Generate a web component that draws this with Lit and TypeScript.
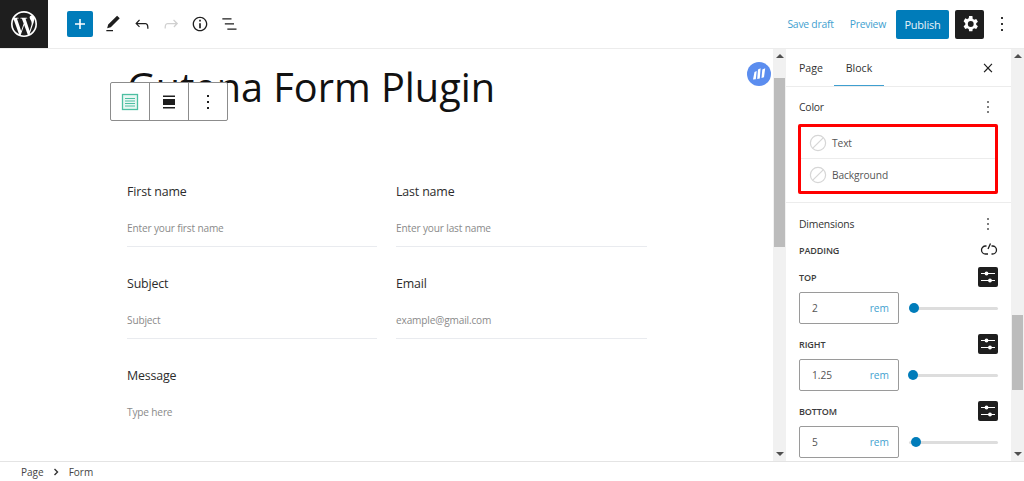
import { LitElement, html, css } from "lit";
import { customElement } from "lit/decorators.js";

const kebab = html`<svg width="24" height="24" viewBox="0 0 24 24" fill="currentColor"><path d="M13 19h-2v-2h2v2zm0-6h-2v-2h2v2zm0-6h-2V5h2v2z"/></svg>`;
const sliders = html`<svg width="20" height="20" viewBox="0 0 20 20" fill="none" stroke="#fff" stroke-width="1.200"><path d="M3 6.500h14M3 13.500h14"/><circle cx="8.500" cy="6.500" r="1.900" fill="#fff" stroke="none"/><circle cx="12" cy="13.500" r="1.900" fill="#fff" stroke="none"/></svg>`;
const noColor = html`<svg class="swatch" width="18" height="18" viewBox="0 0 18 18" fill="none" stroke="#d6d6d6" stroke-width="1.200"><circle cx="9" cy="9" r="7.600"/><path d="M3.800 14.200 14.200 3.800"/></svg>`;

@customElement("app-root")
export class AppRoot extends LitElement {
  static styles = css`
    :host { display: flex; flex-direction: column; width: 1024px; height: 481px; overflow: hidden; background: #fff; color: #1e1e1e; font-family: "Open Sans", "Noto Sans", sans-serif; font-size: 13px; }
    .top { height: 48px; flex: none; display: flex; align-items: center; border-bottom: 1px solid #ececec; }
    .logo { width: 48px; height: 48px; background: #1e1e1e; display: flex; align-items: center; justify-content: center; }
    .tools { display: flex; align-items: center; margin-left: 19px; gap: 0; }
    .add { width: 26px; height: 26px; background: #007cba; border-radius: 2px; display: flex; align-items: center; justify-content: center; margin-right: 6px; }
    .ic { width: 28px; height: 28px; display: flex; align-items: center; justify-content: center; color: #1e1e1e; margin-right: 1px; }
    .ic.off { color: #d0d0d0; }
    .right { margin-left: auto; display: flex; align-items: center; }
    .link { color: #3f9fd0; font-size: 10.4px; letter-spacing: -0.25px; }
    .draft { margin-right: 16px; }
    .prev { margin-right: 10px; }
    .pub { width: 53px; height: 29px; background: #007cba; color: #e8f4fa; border-radius: 2px; display: flex; align-items: center; justify-content: center; font-size: 11px; letter-spacing: -0.2px; margin-right: 6px; }
    .gear { width: 29px; height: 29px; background: #1e1e1e; border-radius: 2px; display: flex; align-items: center; justify-content: center; margin-right: 6px; }
    .more { width: 24px; display: flex; justify-content: center; margin-right: 10px; color: #333; }

    .main { flex: 1; min-height: 0; display: flex; }
    .canvas { width: 773px; flex: none; position: relative; overflow: hidden; padding: 12px 0 0 127px; box-sizing: border-box; }
    h1 { margin: 0; font-weight: 400; font-size: 39.7px; line-height: 52px; color: #111; white-space: nowrap; }
    .form { width: 520px; display: grid; grid-template-columns: 250px 251px; column-gap: 19px; margin-top: 70px; }
    .field { height: 92px; box-sizing: border-box; }
    .lbl { font-size: 12.4px; letter-spacing: -0.15px; line-height: 18px; height: 18px; color: #2c2c2c; margin-bottom: 18px; }
    .ph { font-size: 10.1px; letter-spacing: -0.15px; line-height: 18px; color: #8a8a8a; padding-bottom: 9px; border-bottom: 1px solid #e9ebef; }
    .ph.plain { border-bottom: 0; }

    .blocktb { position: absolute; left: 110px; top: 33px; height: 37px; display: flex; background: #fff; border: 1px solid #8c8c8c; border-radius: 2px; }
    .blocktb div { width: 38px; display: flex; align-items: center; justify-content: center; border-right: 1px solid #8c8c8c; color: #1e1e1e; }
    .blocktb div:last-child { border-right: 0; }
    .badge { position: absolute; left: 747px; top: 13px; width: 24px; height: 24px; }

    .sb { width: 13px; flex: none; background: #f1f1f1; display: flex; flex-direction: column; align-items: center; justify-content: space-between; position: relative; }
    .arrow { width: 0; height: 0; border-left: 4px solid transparent; border-right: 4px solid transparent; margin: 5px 0; }
    .arrow.up { border-bottom: 4px solid #505050; }
    .arrow.down { border-top: 4px solid #505050; }
    .thumb { position: absolute; left: 1px; right: 1px; background: #bcbcbc; }
    .t1 { top: 29px; height: 169px; }
    .t2 { top: 266px; height: 75px; }

    .side { width: 225px; flex: none; overflow: hidden; box-sizing: border-box; }
    .tabs { height: 37px; display: flex; align-items: stretch; border-bottom: 1px solid #ececec; font-size: 10.6px; color: #333; padding-left: 13px; }
    .tab { display: flex; align-items: center; padding-top: 1px; box-sizing: border-box; }
    .tab.page { margin-right: 11px; }
    .tab.block { width: 50px; justify-content: center; border-bottom: 1.5px solid #3f9fd0; height: 37px; }
    .close { margin-left: auto; margin-right: 16px; display: flex; align-items: center; }
    .panel { padding: 0 13px 0 13px; }
    .color { height: 116px; border-bottom: 1px solid #ececec; box-sizing: border-box; }
    .ph-row { display: flex; align-items: center; justify-content: space-between; font-size: 10.4px; letter-spacing: -0.2px; color: #333; height: 38px; padding-top: 1px; box-sizing: border-box; }
    .ph-row span { font-weight: 500; }
    .ph-row svg { margin-right: 0; color: #333; width: 20px; height: 20px; }
    .red { border: 3px solid #f00; border-radius: 2px; width: 200px; margin-left: -1px; box-sizing: border-box; height: 70px; margin-top: -1px; }
    .crow { height: 31px; display: flex; align-items: center; gap: 5px; padding-left: 8px; font-size: 10.2px; letter-spacing: -0.1px; color: #555; }
    .crow + .crow { border-top: 1px solid #ececec; height: 32px; }
    .dim .ph-row { height: 41px; padding-top: 0; }
    .cap { display: flex; align-items: center; justify-content: space-between; font-size: 9px; font-weight: 600; letter-spacing: -0.1px; color: #3c3c3c; }
    .padcap { height: 20px; margin-top: -4px; margin-bottom: 7px; }
    .sidecap { height: 20px; margin-bottom: 5px; }
    .sq { width: 20px; height: 20px; background: #1e1e1e; border-radius: 2px; }
    .ctrl { display: flex; align-items: center; height: 32px; margin-bottom: 10px; }
    .inp { width: 100px; height: 32px; box-sizing: border-box; border: 1px solid #9a9a9a; border-radius: 2px; display: flex; align-items: center; justify-content: space-between; padding: 0 9px 0 12px; font-size: 10.2px; color: #555; flex: none; }
    .inp b { font-weight: 400; color: #3f9fd0; }
    .slider { flex: none; width: 89px; margin-left: 10px; height: 3px; background: #ddd; border-radius: 2px; position: relative; }
    .knob { position: absolute; top: -3.500px; width: 10px; height: 10px; border-radius: 50%; background: #007cba; }

    .foot { height: 19px; flex: none; border-top: 1px solid #e4e4e4; display: flex; align-items: center; font-size: 10px; color: #444; padding-left: 21px; }
    .foot svg { margin: 0 10px 0 9px; }
  `;

  private side(label: string, value: string, knob: number) {
    return html`
      <div class="cap sidecap"><span>${label}</span><div class="sq">${sliders}</div></div>
      <div class="ctrl">
        <div class="inp"><span>${value}</span><b>rem</b></div>
        <div class="slider"><div class="knob" style="left:${knob}px"></div></div>
      </div>`;
  }

  private field(label: string, ph: string, plain = false) {
    return html`<div class="field"><div class="lbl">${label}</div><div class="ph ${plain ? "plain" : ""}">${ph}</div></div>`;
  }

  render() {
    return html`
      <div class="top">
        <div class="logo">
          <svg width="26" height="26" viewBox="0 0 24 24" fill="#fff"><path d="M12 0a12 12 0 1 0 0 24 12 12 0 0 0 0-24zM1.500 12c0-1.500.3-3 .9-4.300l5 13.700A10.500 10.500 0 0 1 1.500 12zM12 22.500c-1 0-2-.15-3-.43l3.150-9.160 3.230 8.850.08.140c-1.090.39-2.260.6-3.460.6zm1.450-15.420c.63-.03 1.200-.1 1.200-.1.560-.07.500-.9-.06-.86 0 0-1.700.13-2.800.13-1.030 0-2.770-.13-2.770-.13-.57-.04-.63.820-.06.860 0 0 .54.070 1.100.1l1.640 4.500-2.300 6.900L5.570 7.080c.63-.03 1.200-.1 1.200-.1.560-.07.500-.9-.06-.86 0 0-1.700.13-2.800.13h-.68A10.480 10.480 0 0 1 12 1.500c2.730 0 5.220 1.040 7.090 2.750h-.14c-1.030 0-1.760.9-1.760 1.860 0 .86.500 1.590 1.030 2.450.4.700.86 1.590.86 2.890 0 .9-.35 1.940-.8 3.400l-1.050 3.500zm3.830 13.980 3.200-9.260c.6-1.500.8-2.700.8-3.770 0-.39-.03-.75-.07-1.090A10.490 10.490 0 0 1 22.500 12c0 3.870-2.100 7.250-5.220 9.060z"/></svg>
        </div>
        <div class="tools">
          <div class="add"><svg width="16" height="16" viewBox="0 0 16 16" fill="#fff"><path d="M7.200 3h1.600v4.200H13v1.600H8.800V13H7.200V8.800H3V7.200h4.200z"/></svg></div>
          <div class="ic"><svg width="20" height="20" viewBox="0 0 24 24" fill="currentColor"><path d="M20.100 5.100 16.900 2 6.200 12.700 5 17l4.300-1.200L20.100 5.100zM4 20.800h8v-1.500H4v1.500z"/></svg></div>
          <div class="ic"><svg width="20" height="20" viewBox="0 0 24 24" fill="currentColor"><path d="M18.300 11.700c-.6-.6-1.400-.9-2.300-.9H6.700l2.900-3.300-1.100-1-4.500 5L8.500 16l1-1-2.700-2.700H16c.5 0 .9.200 1.300.5 1 1 1 3.400 1 4.500v.3h1.500v-.2c0-1.500 0-4.300-1.500-5.700z"/></svg></div>
          <div class="ic off"><svg width="20" height="20" viewBox="0 0 24 24" fill="currentColor"><path d="M15.600 6.500l-1.100 1 2.900 3.300H8c-.9 0-1.700.3-2.300.9-1.400 1.500-1.400 4.200-1.400 5.600v.2h1.500v-.3c0-1.100 0-3.500 1-4.500.3-.3.700-.5 1.300-.5h9.200L15 15.100l1 1 4.500-4.800-4.900-4.800z"/></svg></div>
          <div class="ic"><svg width="20" height="20" viewBox="0 0 24 24" fill="currentColor"><path d="M12 3.200c-4.800 0-8.800 3.900-8.800 8.800 0 4.800 3.900 8.800 8.800 8.800 4.800 0 8.800-3.900 8.800-8.800 0-4.800-4-8.800-8.800-8.800zm0 16c-4 0-7.200-3.300-7.200-7.200C4.800 8 8 4.800 12 4.800s7.200 3.300 7.200 7.200c0 4-3.200 7.200-7.200 7.200zM11 17h2v-6h-2v6zm0-8h2V7h-2v2z"/></svg></div>
          <div class="ic"><svg width="20" height="20" viewBox="0 0 24 24" fill="currentColor"><path d="M4 5h11v1.500H4zM7 11.200h11v1.500H7zM10 17.500h11V19H10z"/></svg></div>
        </div>
        <div class="right">
          <span class="link draft">Save draft</span>
          <span class="link prev">Preview</span>
          <div class="pub">Publish</div>
          <div class="gear"><svg width="20" height="20" viewBox="0 0 24 24" fill="#fff"><path fill-rule="evenodd" d="M19.400 13c.05-.33.080-.66.080-1s-.03-.67-.08-1l2.100-1.650-2-3.460-2.480 1a7.400 7.400 0 0 0-1.730-1L14.900 2.500h-4l-.38 2.650c-.63.25-1.200.6-1.730 1l-2.480-1-2 3.460L6.400 11c-.05.33-.08.66-.08 1s.03.67.08 1l-2.100 1.650 2 3.460 2.480-1c.53.4 1.100.75 1.730 1l.38 2.650h4l.38-2.650c.63-.25 1.200-.6 1.730-1l2.480 1 2-3.460zM12.900 15.500a3.500 3.500 0 1 1 0-7 3.500 3.500 0 0 1 0 7z"/></svg></div>
          <div class="more">${kebab}</div>
        </div>
      </div>
      <div class="main">
        <div class="canvas">
          <h1>Gutena Form Plugin</h1>
          <div class="form">
            ${this.field("First name", "Enter your first name")}
            ${this.field("Last name", "Enter your last name")}
            ${this.field("Subject", "Subject")}
            ${this.field("Email", "example@gmail.com")}
            ${this.field("Message", "Type here", true)}
          </div>
          <div class="blocktb">
            <div><svg width="18" height="18" viewBox="0 0 18 18" fill="none"><rect x="1.500" y="1.500" width="15" height="15" fill="#e9f7f3" stroke="#4dbfa2" stroke-width="1.300"/><path d="M4 5.500h10M4 8h10M4 10.500h10M4 13h10" stroke="#4dbfa2"/></svg></div>
            <div><svg width="18" height="18" viewBox="0 0 18 18"><path d="M3 2.500h12V4H3zM3 6h12v6H3zM3 14h12v1.500H3z" fill="#1e1e1e"/></svg></div>
            <div>${kebab}</div>
          </div>
          <svg class="badge" viewBox="0 0 24 24"><circle cx="12" cy="12" r="12" fill="#5b8def"/><path d="M6 17.500 7.500 10l2.200-1-.9 8.300zM10.200 17 11 7.500l2.600-1.200L12.800 16.500zM14.500 16l.8-8.500 2.900-1.300-1.200 9z" fill="#fff"/></svg>
        </div>
        <div class="sb"><div class="arrow up"></div><div class="thumb t1"></div><div class="arrow down"></div></div>
        <div class="side">
          <div class="tabs">
            <div class="tab page">Page</div>
            <div class="tab block">Block</div>
            <div class="close"><svg width="14" height="14" viewBox="0 0 24 24" fill="#1e1e1e"><path d="M13.500 12l6-6.300-1.500-1.400-6 6.200-6-6.200-1.500 1.400 6 6.300-6 6.300 1.500 1.400 6-6.200 6 6.200 1.500-1.400z"/></svg></div>
          </div>
          <div class="panel color">
            <div class="ph-row"><span>Color</span>${kebab}</div>
            <div class="red">
              <div class="crow">${noColor}<span>Text</span></div>
              <div class="crow">${noColor}<span>Background</span></div>
            </div>
          </div>
          <div class="panel dim">
            <div class="ph-row"><span>Dimensions</span>${kebab}</div>
            <div class="cap padcap"><span>PADDING</span>
              <svg width="18" height="18" viewBox="0 0 18 18" fill="none" stroke="#1e1e1e" stroke-width="1.300"><path d="M6.500 5H5.500a3.800 3.800 0 0 0 0 8H8M11.500 5h1a3.800 3.800 0 0 1 0 8H11.500M10.500 2.500 8 8"/></svg>
            </div>
            ${this.side("TOP", "2", 0)}
            ${this.side("RIGHT", "1.25", -1)}
            ${this.side("BOTTOM", "5", 2)}
          </div>
        </div>
        <div class="sb"><div class="arrow up"></div><div class="thumb t2"></div><div class="arrow down"></div></div>
      </div>
      <div class="foot"><span>Page</span><svg width="6" height="8" viewBox="0 0 6 8" fill="none" stroke="#333" stroke-width="1.400"><path d="M1.500 1 4.500 4 1.500 7"/></svg><span>Form</span></div>
    `;
  }
}
